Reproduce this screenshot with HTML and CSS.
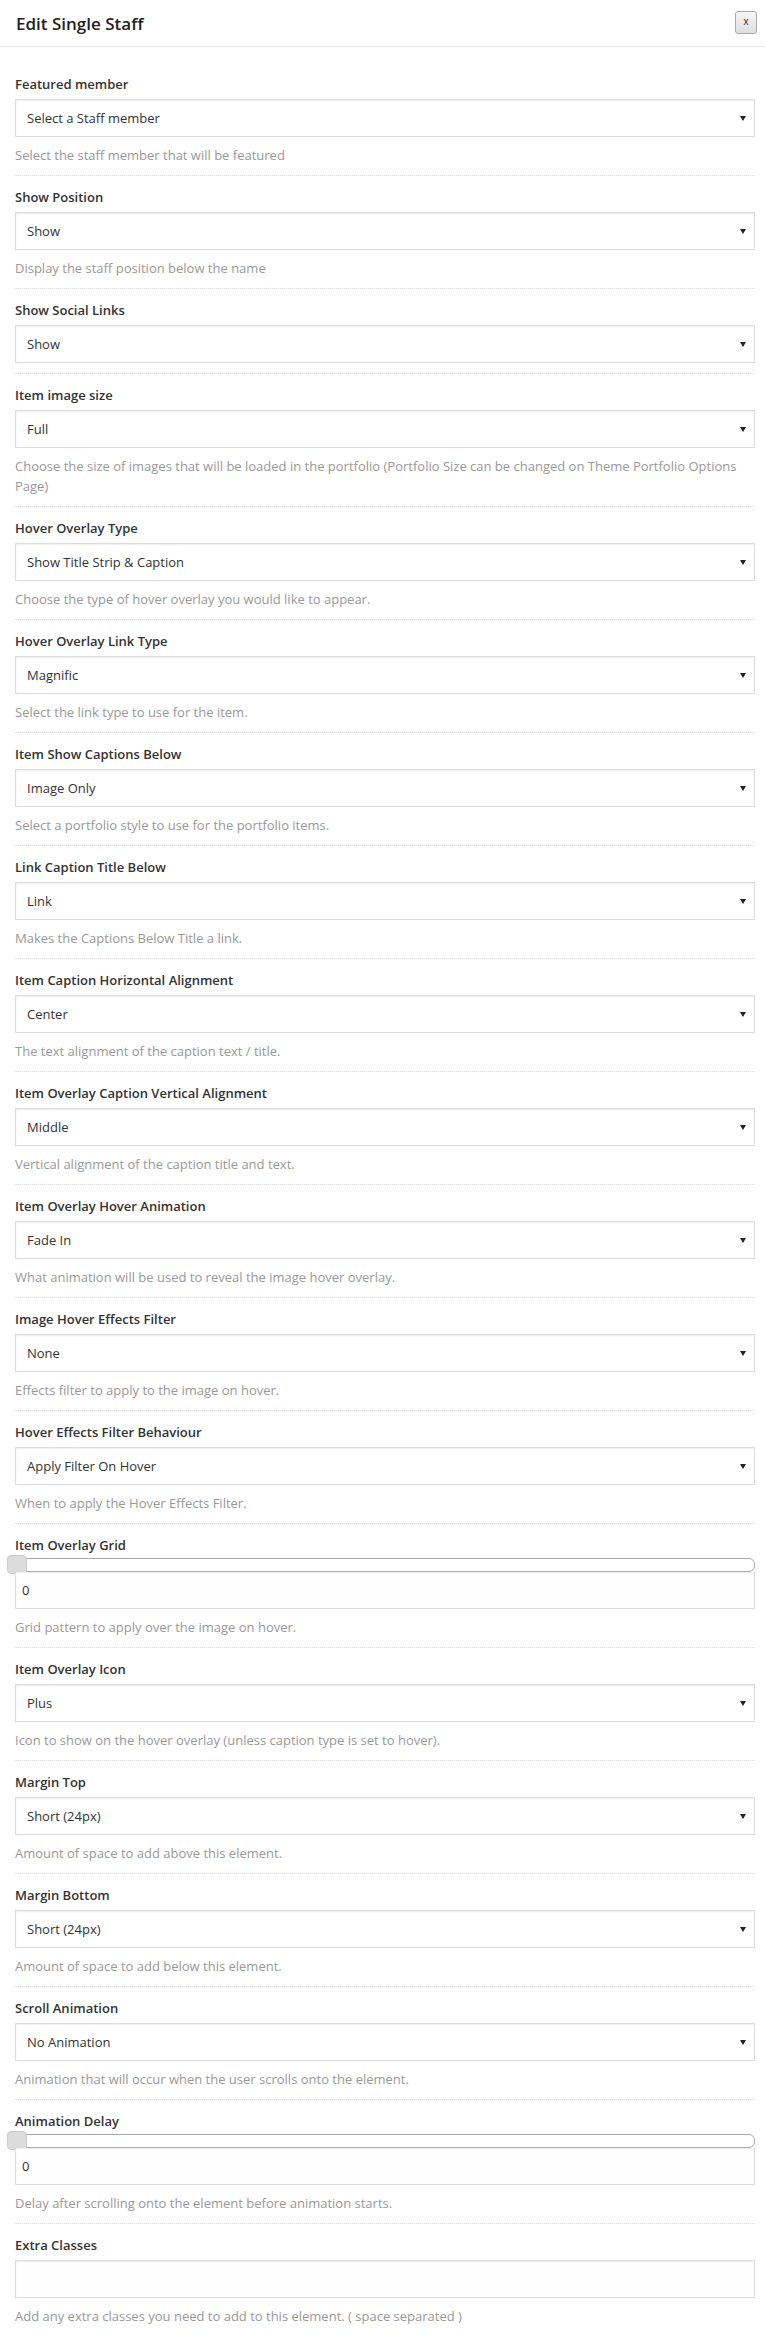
FILE: index.html
```html
<!DOCTYPE html>
<html lang="en">
<head>
  <meta charset="UTF-8">
  <meta name="viewport" content="width=device-width, initial-scale=1.0">
  <title>Edit Single Staff</title>
  <link rel="stylesheet" href="styles.css">
</head>
<body>

  <div class="modal">
    <div class="modal-header">
      <h3>Edit Single Staff</h3>
      <button type="button" class="close-btn">x</button>
    </div>

    <div class="modal-body">
      <div class="field">
        <label>Featured member</label>
        <div class="select">Select a Staff member</div>
        <p class="desc">Select the staff member that will be featured</p>
      </div>

      <div class="field">
        <label>Show Position</label>
        <div class="select">Show</div>
        <p class="desc">Display the staff position below the name</p>
      </div>

      <div class="field">
        <label>Show Social Links</label>
        <div class="select">Show</div>
      </div>

      <div class="field">
        <label>Item image size</label>
        <div class="select">Full</div>
        <p class="desc">Choose the size of images that will be loaded in the portfolio (Portfolio Size can be changed on Theme Portfolio Options Page)</p>
      </div>

      <div class="field">
        <label>Hover Overlay Type</label>
        <div class="select">Show Title Strip &amp; Caption</div>
        <p class="desc">Choose the type of hover overlay you would like to appear.</p>
      </div>

      <div class="field">
        <label>Hover Overlay Link Type</label>
        <div class="select">Magnific</div>
        <p class="desc">Select the link type to use for the item.</p>
      </div>

      <div class="field">
        <label>Item Show Captions Below</label>
        <div class="select">Image Only</div>
        <p class="desc">Select a portfolio style to use for the portfolio items.</p>
      </div>

      <div class="field">
        <label>Link Caption Title Below</label>
        <div class="select">Link</div>
        <p class="desc">Makes the Captions Below Title a link.</p>
      </div>

      <div class="field">
        <label>Item Caption Horizontal Alignment</label>
        <div class="select">Center</div>
        <p class="desc">The text alignment of the caption text / title.</p>
      </div>

      <div class="field">
        <label>Item Overlay Caption Vertical Alignment</label>
        <div class="select">Middle</div>
        <p class="desc">Vertical alignment of the caption title and text.</p>
      </div>

      <div class="field">
        <label>Item Overlay Hover Animation</label>
        <div class="select">Fade In</div>
        <p class="desc">What animation will be used to reveal the image hover overlay.</p>
      </div>

      <div class="field">
        <label>Image Hover Effects Filter</label>
        <div class="select">None</div>
        <p class="desc">Effects filter to apply to the image on hover.</p>
      </div>

      <div class="field">
        <label>Hover Effects Filter Behaviour</label>
        <div class="select">Apply Filter On Hover</div>
        <p class="desc">When to apply the Hover Effects Filter.</p>
      </div>

      <div class="field">
        <label>Item Overlay Grid</label>
        <div class="slider"><span class="handle"></span></div>
        <div class="text-input">0</div>
        <p class="desc">Grid pattern to apply over the image on hover.</p>
      </div>

      <div class="field">
        <label>Item Overlay Icon</label>
        <div class="select">Plus</div>
        <p class="desc">Icon to show on the hover overlay (unless caption type is set to hover).</p>
      </div>

      <div class="field">
        <label>Margin Top</label>
        <div class="select">Short (24px)</div>
        <p class="desc">Amount of space to add above this element.</p>
      </div>

      <div class="field">
        <label>Margin Bottom</label>
        <div class="select">Short (24px)</div>
        <p class="desc">Amount of space to add below this element.</p>
      </div>

      <div class="field">
        <label>Scroll Animation</label>
        <div class="select">No Animation</div>
        <p class="desc">Animation that will occur when the user scrolls onto the element.</p>
      </div>

      <div class="field">
        <label>Animation Delay</label>
        <div class="slider"><span class="handle"></span></div>
        <div class="text-input">0</div>
        <p class="desc">Delay after scrolling onto the element before animation starts.</p>
      </div>

      <div class="field">
        <label>Extra Classes</label>
        <div class="text-input"></div>
        <p class="desc">Add any extra classes you need to add to this element. ( space separated )</p>
      </div>
    </div>
  </div>

</body>
</html>
```

FILE: styles.css
```css
body {
  font-family: "Open Sans", "Liberation Sans", sans-serif;
  margin: 0;
  padding: 0;
  background-color: #fff;
  color: #333;
}
.modal {
  width: 100%;
}
.modal-header {
  display: flex;
  justify-content: space-between;
  align-items: center;
  height: 46px;
  padding: 0 8px 0 16px;
  border-bottom: 1px solid #e8e8e8;
}
.modal-header h3 {
  margin: 0;
  font-size: 17px;
  font-weight: 600;
  color: #222;
}
.close-btn {
  width: 22px;
  height: 23px;
  margin-top: -2px;
  padding: 0;
  font-family: "Liberation Sans", sans-serif;
  font-size: 10px;
  line-height: 20px;
  color: #333;
  background: linear-gradient(#f7f7f7, #dedede);
  border: 1px solid #aaa;
  border-radius: 3px;
}
.modal-body {
  padding: 16px 10px 0 15px;
}
.field {
  padding: 12px 0 10px;
  border-bottom: 1px dotted #ddd;
}
.field:last-child {
  border-bottom: none;
}
label {
  display: block;
  font-size: 13px;
  line-height: 18px;
  font-weight: 600;
  color: #333;
  margin-bottom: 6px;
}
.select, .text-input {
  position: relative;
  height: 36px;
  line-height: 36px;
  border: 1px solid #ddd;
  box-shadow: inset 0 1px 2px rgba(0, 0, 0, 0.07);
  background-color: #fff;
  font-size: 13px;
  color: #333;
}
.select {
  padding: 0 11px;
}
.select::after {
  content: "";
  position: absolute;
  right: 8px;
  top: 16px;
  border-left: 3px solid transparent;
  border-right: 3px solid transparent;
  border-top: 5px solid #222;
}
.text-input {
  padding: 0 6px;
  border-top: none;
  background-color: #fefefe;
}
.field > label + .text-input {
  border-top: 1px solid #ddd;
}
.slider {
  position: relative;
  height: 12px;
  margin-top: -2px;
  border: 1px solid #aaa;
  border-radius: 6px;
  background-color: #fff;
}
.handle {
  position: absolute;
  left: -9px;
  top: -4px;
  width: 18px;
  height: 17px;
  background-color: #dcdcdc;
  border: 1px solid #ccc;
  border-radius: 4px;
}
.desc {
  margin: 8px 0 0;
  font-size: 13px;
  line-height: 20px;
  color: #999;
}
```
